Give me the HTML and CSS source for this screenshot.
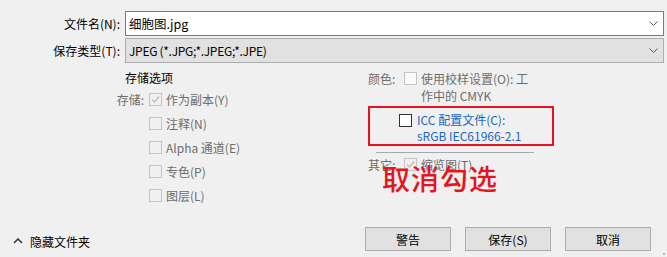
FILE: index.html
```html
<!DOCTYPE html>
<html lang="zh-CN">
<head>
<meta charset="utf-8">
<title>保存</title>
<link rel="stylesheet" href="styles.css">
</head>
<body>
<div class="dialog">
  <div class="form">
    <div class="row">
      <label class="lbl">文件名(N):</label>
      <div class="field input">
        <span class="value">细胞图.jpg</span>
        <svg class="chev" width="9" height="5" viewBox="0 0 9 5"><polyline points="0.5,0.5 4.5,4.5 8.5,0.5" fill="none" stroke="#5a5a5a" stroke-width="1"/></svg>
      </div>
    </div>
    <div class="row">
      <label class="lbl">保存类型(T):</label>
      <div class="field select">
        <span class="value narrow">JPEG (*.JPG;*.JPEG;*.JPE)</span>
        <svg class="chev" width="9" height="5" viewBox="0 0 9 5"><polyline points="0.5,0.5 4.5,4.5 8.5,0.5" fill="none" stroke="#5a5a5a" stroke-width="1"/></svg>
      </div>
    </div>
  </div>

  <div class="options">
    <div class="left">
      <div class="title">存储选项</div>
      <div class="opt-grid">
        <span class="olbl">存储:</span>
        <span class="cb dis checked"><svg width="11" height="11" viewBox="0 0 11 11"><polyline points="2,5.5 4.5,8 9,2.5" fill="none" stroke="#bdbdbd" stroke-width="1.2"/></svg></span>
        <span class="otext">作为副本(Y)</span>

        <span class="olbl"></span>
        <span class="cb dis"></span>
        <span class="otext">注释(N)</span>

        <span class="olbl"></span>
        <span class="cb dis"></span>
        <span class="otext">Alpha 通道(E)</span>

        <span class="olbl"></span>
        <span class="cb dis"></span>
        <span class="otext">专色(P)</span>

        <span class="olbl"></span>
        <span class="cb dis"></span>
        <span class="otext">图层(L)</span>
      </div>
    </div>

    <div class="right">
      <div class="color-row">
        <span class="olbl2">颜色:</span>
        <span class="cb dis light"></span>
        <span class="otext multi">使用校样设置(O): 工<br>作中的 CMYK</span>
      </div>
      <div class="icc-box">
        <span class="cb on"></span>
        <span class="icc-text">ICC 配置文件(C):<br>sRGB IEC61966-2.1</span>
      </div>
      <div class="sep"></div>
      <div class="other-row">
        <span class="olbl2">其它:</span>
        <span class="cb dis checked"><svg width="11" height="11" viewBox="0 0 11 11"><polyline points="2,5.5 4.5,8 9,2.5" fill="none" stroke="#bdbdbd" stroke-width="1.2"/></svg></span>
        <span class="otext">缩览图(T)</span>
      </div>
      <div class="annot">取消勾选</div>
    </div>
  </div>

  <div class="footer">
    <div class="hide-folders">
      <svg width="10" height="6" viewBox="0 0 10 6"><polyline points="1,5 5,1 9,5" fill="none" stroke="#333" stroke-width="1.5"/></svg>
      <span>隐藏文件夹</span>
    </div>
    <div class="buttons">
      <button class="btn">警告</button>
      <button class="btn">保存(S)</button>
      <button class="btn">取消</button>
    </div>
    <span class="grip"></span>
  </div>
</div>
</body>
</html>
```

FILE: styles.css
```css
* { box-sizing: border-box; }
html, body {
  margin: 0;
  padding: 0;
  background: #f0f0f0;
}
body {
  font-family: "Noto Sans CJK SC", "Open Sans", sans-serif;
  font-size: 12px;
  color: #000;
}
.dialog {
  width: 667px;
  height: 257px;
  display: flex;
  flex-direction: column;
  position: relative;
}
.form {
  padding: 11px 3px 0 0;
  display: flex;
  flex-direction: column;
  gap: 2px;
}
.row {
  display: flex;
  align-items: center;
  height: 25px;
}
.lbl {
  width: 125px;
  padding-right: 5px;
  text-align: right;
  white-space: nowrap;
}
.field {
  flex: 1;
  height: 25px;
  display: flex;
  align-items: center;
  justify-content: space-between;
  padding: 0 5px 0 3px;
}
.input {
  background: #fff;
  border: 1px solid #7a7a7a;
  font-size: 12.5px;
}
.select {
  background: #e1e1e1;
  border: 1px solid #adadad;
}
.narrow { letter-spacing: -0.3px; }
.chev { flex: none; }

.options {
  display: flex;
  padding-left: 100px;
  margin-top: 7px;
}
.left { width: 268px; }
.title {
  margin-left: 25px;
  line-height: 16px;
  height: 16px;
}
.opt-grid {
  display: grid;
  grid-template-columns: 45px 13px auto;
  grid-auto-rows: 24px;
  column-gap: 4px;
  align-items: center;
  margin-top: 1px;
  color: #6d6d6d;
}
.olbl {
  text-align: right;
  margin-right: 1px;
}
.cb {
  width: 13px;
  height: 13px;
  display: inline-flex;
  align-items: center;
  justify-content: center;
  flex: none;
}
.cb.dis {
  border: 1px solid #c4c4c4;
  background: #f0f0f0;
}
.cb.light { background: #fafafa; }
.cb.on {
  border: 1px solid #333;
  background: #fff;
}
.otext { white-space: nowrap; color: #6d6d6d; }

.right {
  width: 186px;
  position: relative;
  color: #6d6d6d;
}
.color-row {
  display: grid;
  grid-template-columns: 32px 13px auto;
  column-gap: 4px;
  align-items: start;
  line-height: 17px;
}
.color-row .cb { margin-top: 2px; }
.icc-box {
  margin-top: 2px;
  height: 40px;
  border: 2px solid #e81123;
  display: flex;
  align-items: flex-start;
  padding: 4px 0 0 29px;
  gap: 5px;
}
.icc-box .cb { margin-top: 2px; }
.icc-text {
  color: #1a66c2;
  line-height: 16px;
  white-space: nowrap;
}
.sep {
  margin: 6px 20px 0 8px;
  height: 1px;
  background: #a8a8a8;
}
.other-row {
  display: grid;
  grid-template-columns: 32px 13px auto;
  column-gap: 4px;
  align-items: center;
  height: 22px;
}
.annot {
  position: absolute;
  left: 14px;
  top: 92px;
  font-size: 28px;
  line-height: 32px;
  font-weight: 500;
  color: #e8141c;
  white-space: nowrap;
  letter-spacing: 1px;
}

.footer {
  margin-top: auto;
  display: flex;
  align-items: center;
  justify-content: space-between;
  padding: 0 16px 6px 13px;
  position: relative;
}
.hide-folders {
  display: flex;
  align-items: center;
  gap: 7px;
  margin-top: 4px;
}
.buttons {
  display: flex;
  gap: 14px;
}
.btn {
  width: 86px;
  height: 24px;
  background: #e1e1e1;
  border: 1px solid #adadad;
  font-family: inherit;
  font-size: 12px;
  color: #000;
  padding: 0;
}
.grip {
  position: absolute;
  right: 2px;
  bottom: 2px;
  width: 2px;
  height: 2px;
  background: #b5b5b5;
}
```
